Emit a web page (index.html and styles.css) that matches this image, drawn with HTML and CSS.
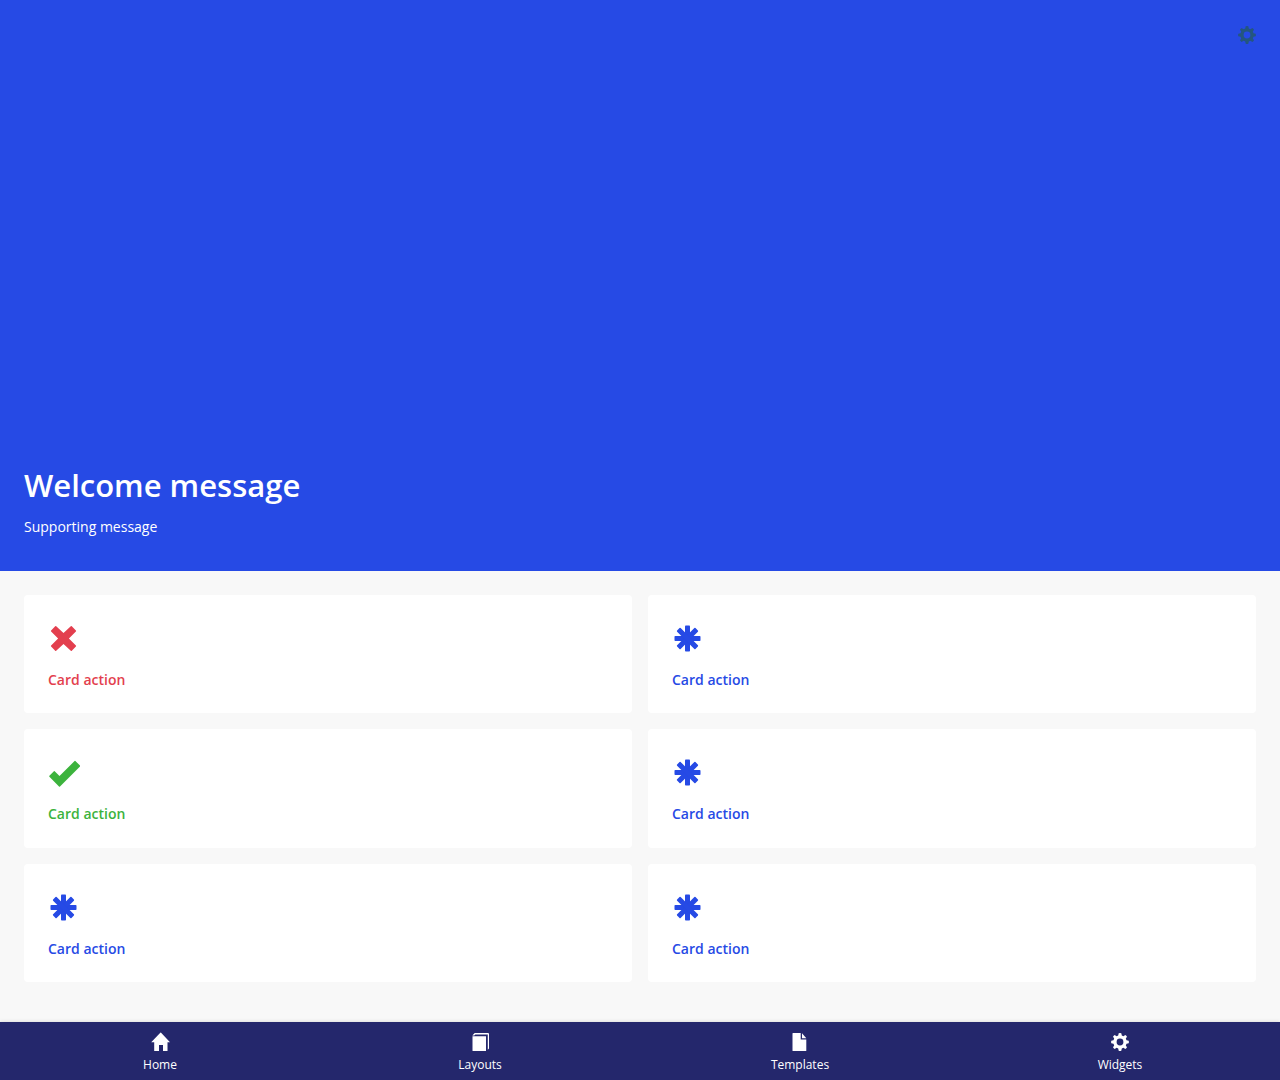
FILE: index.html
```html
<!DOCTYPE html>
<html lang="en">
<head>
<meta charset="utf-8">
<meta name="viewport" content="width=device-width, initial-scale=1">
<title>Home</title>
<link rel="stylesheet" href="styles.css">
</head>
<body>
<svg class="sprite" aria-hidden="true">
  <symbol id="gear" viewBox="0 0 18 18">
    <path fill-rule="evenodd" d="M7.700.3Q9-.1 10.300.3L10.800 2.500 12.400 3.200 14.300 2Q15.400 2.600 16 3.700L14.800 5.600 15.500 7.200 17.700 7.700Q18.100 9 17.700 10.300L15.500 10.800 14.800 12.400 16 14.300Q15.400 15.400 14.300 16L12.400 14.800 10.800 15.500 10.300 17.700Q9 18.100 7.700 17.700L7.200 15.500 5.600 14.800 3.700 16Q2.600 15.400 2 14.300L3.200 12.400 2.500 10.800.3 10.300Q-.1 9 .3 7.700L2.500 7.200 3.200 5.600 2 3.700Q2.600 2.600 3.700 2L5.600 3.200 7.200 2.500ZM9 5.600A3.400 3.400 0 1 0 9 12.400A3.400 3.400 0 1 0 9 5.600Z"/>
  </symbol>
  <symbol id="asterisk" viewBox="0 0 32 32">
    <g transform="translate(15.500 15.500)">
      <rect x="-2.500" y="-13" width="5" height="26" rx=".8"/>
      <rect x="-13" y="-2.500" width="26" height="5" rx=".8"/>
      <rect x="-2.500" y="-13" width="5" height="26" rx=".8" transform="rotate(45)"/>
      <rect x="-2.500" y="-13" width="5" height="26" rx=".8" transform="rotate(-45)"/>
    </g>
  </symbol>
</svg>

<header class="hero">
  <button class="hero-settings" type="button" aria-label="Settings"><svg class="icon"><use href="#gear"/></svg></button>
  <div class="hero-text">
    <h1>Welcome message</h1>
    <p>Supporting message</p>
  </div>
</header>

<main class="cards">
  <a class="card danger" href="#"><svg class="card-icon" viewBox="0 0 32 32"><path d="M8.200 3.300 15.500 10.100 22.800 3.300Q23.300 2.800 23.800 3.300L27.900 7.400Q28.400 7.900 27.900 8.400L20.900 15.500 27.900 22.600Q28.400 23.100 27.900 23.600L23.800 27.700Q23.300 28.200 22.800 27.700L15.500 20.900 8.200 27.700Q7.700 28.200 7.200 27.700L3.100 23.600Q2.600 23.100 3.100 22.600L10.100 15.500 3.100 8.400Q2.600 7.900 3.100 7.400L7.200 3.300Q7.700 2.800 8.200 3.300Z"/></svg><span>Card action</span></a>
  <a class="card" href="#"><svg class="card-icon"><use href="#asterisk"/></svg><span>Card action</span></a>
  <a class="card success" href="#"><svg class="card-icon" viewBox="0 0 32 32"><path d="M11 29.500 1.400 19.700Q1 19.200 1.400 18.800L5.900 14.300Q6.300 13.900 6.700 14.300L11.500 18.900 26.600 4Q27 3.600 27.400 4L32 8.600Q32.300 9 32 9.400L12 29.500Q11.500 30 11 29.500Z"/></svg><span>Card action</span></a>
  <a class="card" href="#"><svg class="card-icon"><use href="#asterisk"/></svg><span>Card action</span></a>
  <a class="card" href="#"><svg class="card-icon"><use href="#asterisk"/></svg><span>Card action</span></a>
  <a class="card" href="#"><svg class="card-icon"><use href="#asterisk"/></svg><span>Card action</span></a>
</main>

<nav class="tabs" aria-label="Main">
  <a href="#"><svg class="tab-icon" viewBox="0 0 20 20"><path d="M10.300.8Q10.700.4 11.100.8L20 10.200H17.500V19H13V13H9V19H4.200V10.200H1.200Z"/></svg><span>Home</span></a>
  <a href="#"><svg class="tab-icon" viewBox="0 0 20 20"><path d="M2.500 4.200H16V19H3Q2.500 19 2.500 18.500ZM2.500 3.200 4.700 1H18Q19 1 19 2V16.500L17.800 17.800V2.600H5.300L4.300 3.600H2.500Z"/></svg><span>Layouts</span></a>
  <a href="#"><svg class="tab-icon" viewBox="0 0 20 20"><path d="M3 1H10.700V7.600H16.300V18.500Q16.300 19 15.800 19H3Q2.500 19 2.500 18.500V1.500Q2.500 1 3 1ZM12 1.200 16.300 6.300H12Z"/></svg><span>Templates</span></a>
  <a href="#"><svg class="tab-icon" viewBox="-1 -1 20 20"><use href="#gear" width="18" height="18"/></svg><span>Widgets</span></a>
</nav>
</body>
</html>
```
FILE: styles.css
```css
* {
  box-sizing: border-box;
}

body {
  display: flex;
  flex-direction: column;
  min-height: 100vh;
  margin: 0;
  background: #f8f8f8;
  color: #fff;
  font: 14px/20px "Open Sans", sans-serif;
}

svg {
  display: block;
  fill: currentColor;
}

a {
  color: inherit;
  text-decoration: none;
}

.sprite {
  position: absolute;
  width: 0;
  height: 0;
}

.hero {
  display: flex;
  flex: 1;
  flex-direction: column;
  justify-content: space-between;
  padding: 26px 24px 34px;
  background: #264ae5;
}

.hero-settings {
  align-self: flex-end;
  padding: 0;
  border: 0;
  background: none;
  color: #24567f;
}

.icon {
  width: 18px;
  height: 18px;
}

.hero h1 {
  margin: 0 0 11px;
  font-size: 31px;
  font-weight: 600;
  line-height: 42px;
}

.hero p {
  margin: 0;
}

.cards {
  display: grid;
  grid-template-columns: 1fr 1fr;
  gap: 16px;
  min-height: 451px;
  padding: 24px 24px 40px;
}

.card {
  display: flex;
  flex-direction: column;
  gap: 15px;
  padding: 28px 24px 22px;
  border-radius: 4px;
  background: #fff;
  color: #264ae5;
  font-weight: 600;
}

.card.danger {
  color: #e33f4e;
}

.card.success {
  color: #3cb33d;
}

.card-icon {
  width: 32px;
  height: 32px;
}

.tabs {
  display: flex;
  position: sticky;
  bottom: 0;
  background: #24276c;
  box-shadow: 0 0 4px rgba(0, 0, 0, 0.15);
  font-size: 12px;
  line-height: 18px;
}

.tabs a {
  display: flex;
  flex: 1;
  flex-direction: column;
  align-items: center;
  gap: 4px;
  padding: 10px 0 6px;
}

.tab-icon {
  width: 20px;
  height: 20px;
}
```
